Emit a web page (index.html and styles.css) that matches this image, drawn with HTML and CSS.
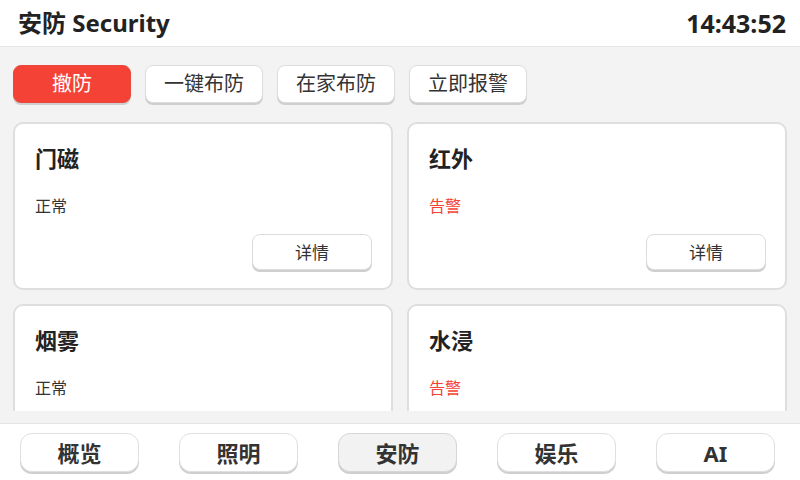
FILE: index.html
```html
<!DOCTYPE html>
<html lang="zh">
<head>
<meta charset="utf-8">
<title>安防 Security</title>
<link rel="stylesheet" href="styles.css">
</head>
<body>
<div class="app">
  <header class="topbar">
    <div class="title">安防 Security</div>
    <div class="clock">14:43:52</div>
  </header>
  <main class="main">
    <div class="actions">
      <button class="act act-red">撤防</button>
      <button class="act">一键布防</button>
      <button class="act">在家布防</button>
      <button class="act">立即报警</button>
    </div>
    <div class="scroll">
      <div class="grid">
        <div class="card">
          <div class="card-title">门磁</div>
          <div class="status">正常</div>
          <div class="card-foot"><button class="detail">详情</button></div>
        </div>
        <div class="card">
          <div class="card-title">红外</div>
          <div class="status alarm">告警</div>
          <div class="card-foot"><button class="detail">详情</button></div>
        </div>
        <div class="card">
          <div class="card-title">烟雾</div>
          <div class="status">正常</div>
          <div class="card-foot"><button class="detail">详情</button></div>
        </div>
        <div class="card">
          <div class="card-title">水浸</div>
          <div class="status alarm">告警</div>
          <div class="card-foot"><button class="detail">详情</button></div>
        </div>
      </div>
    </div>
  </main>
  <nav class="nav">
    <button class="tab">概览</button>
    <button class="tab">照明</button>
    <button class="tab tab-active">安防</button>
    <button class="tab">娱乐</button>
    <button class="tab">AI</button>
  </nav>
</div>
</body>
</html>
```

FILE: styles.css
```css
* { box-sizing: border-box; }
html, body {
  margin: 0;
  padding: 0;
  width: 800px;
  height: 480px;
  overflow: hidden;
  background: #f3f3f3;
  font-family: "Noto Sans", "Noto Sans CJK SC", sans-serif;
  color: #222;
}
button {
  font-family: inherit;
  line-height: 1;
  cursor: pointer;
}
.app {
  width: 800px;
  height: 480px;
  display: flex;
  flex-direction: column;
}
.topbar {
  height: 47px;
  flex: 0 0 47px;
  background: #fff;
  border-bottom: 1px solid #e6e6e6;
  display: flex;
  align-items: center;
  justify-content: space-between;
  padding: 0 14px 0 18px;
}
.title {
  font-size: 24px;
  font-weight: 700;
  line-height: 30px;
  color: #222;
}
.clock {
  font-size: 25px;
  font-weight: 700;
  line-height: 30px;
  color: #222;
}
.main {
  flex: 1;
  display: flex;
  flex-direction: column;
  padding: 18px 13px 12px;
  min-height: 0;
}
.actions {
  display: flex;
  gap: 14px;
  height: 40px;
  flex: 0 0 40px;
}
.act {
  width: 118px;
  height: 38px;
  border: 1px solid #dcdcdc;
  border-radius: 8px;
  background: #fff;
  color: #333;
  font-size: 20px;
  font-weight: 400;
  padding: 0;
  box-shadow: 0 2px 0 #cfcfcf;
}
.act-red {
  background: #f44336;
  border-color: #e8493c;
  color: #fff;
}
.scroll {
  flex: 1;
  min-height: 0;
  overflow: hidden;
  margin-top: 17px;
}
.grid {
  display: grid;
  grid-template-columns: 380px 380px;
  column-gap: 14px;
  row-gap: 14px;
}
.card {
  height: 168px;
  background: #fff;
  border: 2px solid #dedede;
  border-radius: 10px;
  padding: 19px 19px 18px 20px;
  display: flex;
  flex-direction: column;
}
.card-title {
  font-size: 22px;
  font-weight: 700;
  line-height: 30px;
  color: #222;
}
.status {
  margin-top: 22px;
  font-size: 16px;
  line-height: 22px;
  color: #333;
}
.status.alarm {
  color: #f44336;
}
.card-foot {
  margin-top: auto;
  display: flex;
  justify-content: flex-end;
}
.detail {
  width: 120px;
  height: 36px;
  border: 1px solid #dcdcdc;
  border-radius: 8px;
  background: #fff;
  color: #333;
  font-size: 17px;
  padding: 0;
  box-shadow: 0 2px 0 #cfcfcf;
}
.nav {
  height: 57px;
  flex: 0 0 57px;
  background: #fff;
  border-top: 1px solid #e6e6e6;
  display: flex;
  gap: 40px;
  padding: 9px 20px 0;
}
.tab {
  width: 119px;
  height: 39px;
  border: 1px solid #e0e0e0;
  border-radius: 12px;
  background: #fff;
  color: #333;
  font-size: 22px;
  font-weight: 700;
  padding: 0;
  box-shadow: 0 2px 0 #cfcfcf;
}
.tab-active {
  background: #f2f2f2;
  border-color: #d6d6d6;
}
```
